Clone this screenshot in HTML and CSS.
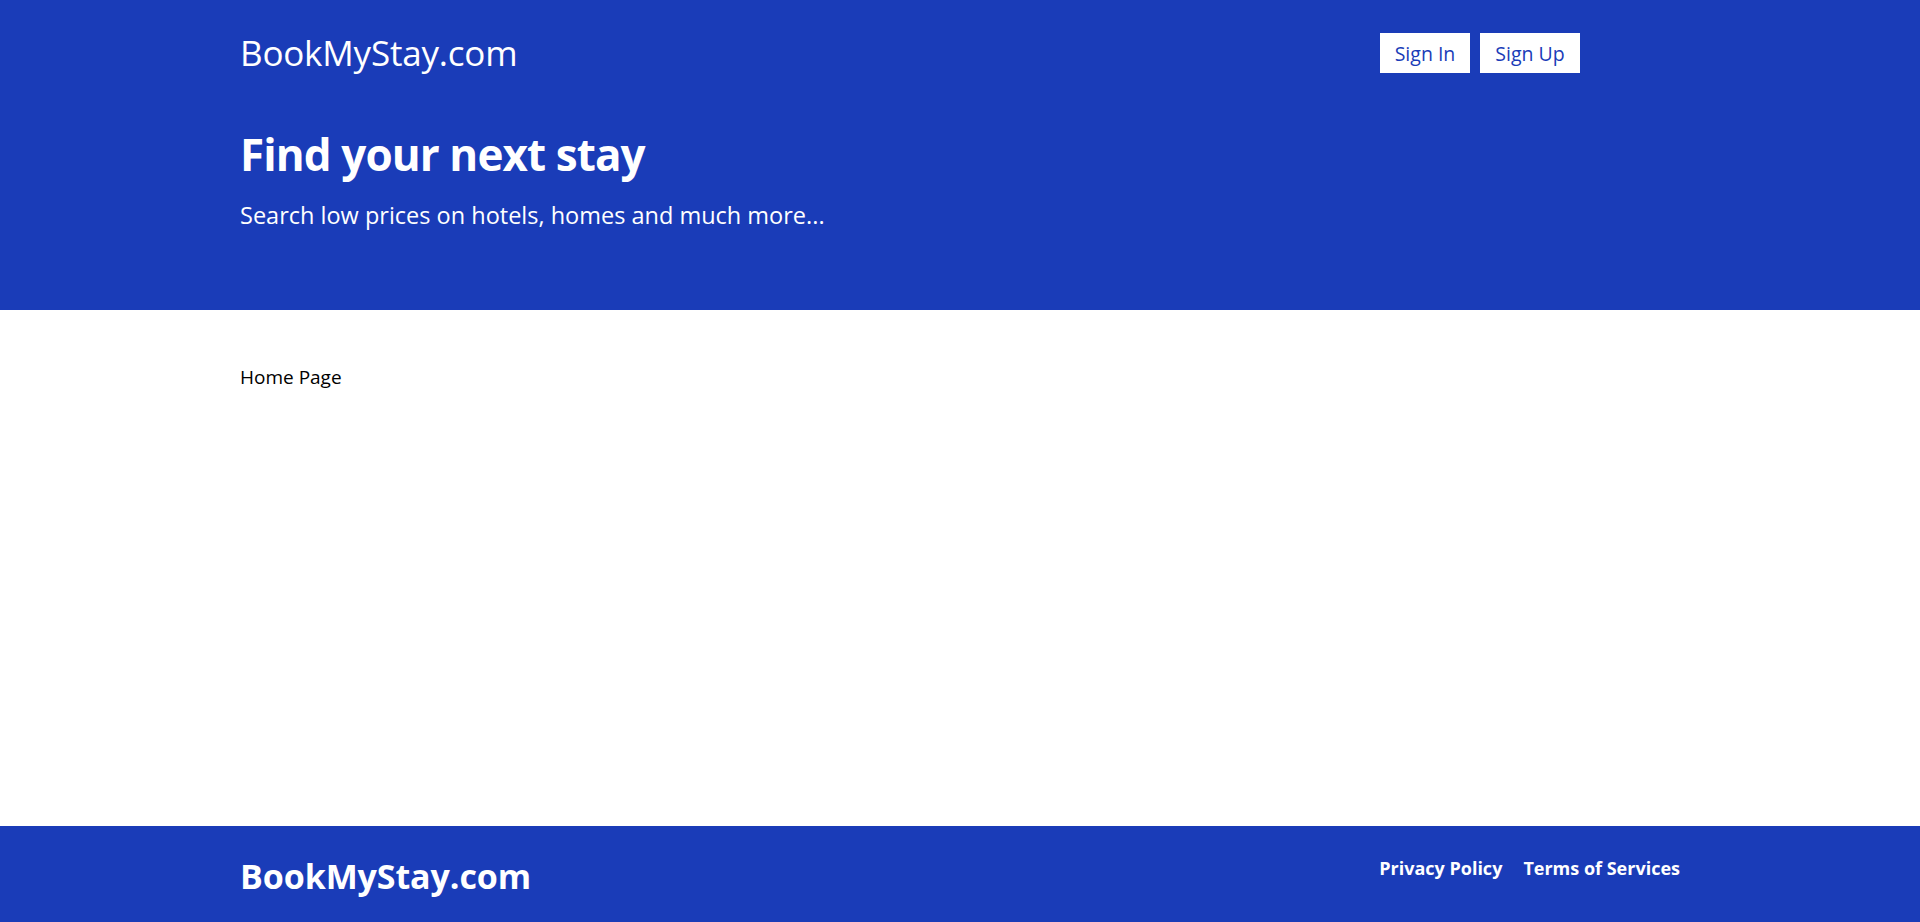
FILE: index.html
```html
<!DOCTYPE html>
<html lang="en">
<head>
<meta charset="utf-8">
<title>BookMyStay.com</title>
<link rel="stylesheet" href="styles.css">
</head>
<body>
<header class="hero">
  <div class="container">
    <div class="topbar">
      <span class="logo">BookMyStay.com</span>
      <div class="auth">
        <a class="btn btn-in" href="#">Sign In</a>
        <a class="btn btn-up" href="#">Sign Up</a>
      </div>
    </div>
    <h1 class="hero-title">Find your next stay</h1>
    <p class="hero-sub">Search low prices on hotels, homes and much more...</p>
  </div>
</header>
<main class="content container">
  <p class="page-label">Home Page</p>
</main>
<footer class="footer">
  <div class="container footer-inner">
    <span class="footer-logo">BookMyStay.com</span>
    <nav class="footer-links">
      <a href="#">Privacy Policy</a>
      <a href="#">Terms of Services</a>
    </nav>
  </div>
</footer>
</body>
</html>
```
FILE: styles.css
```css
* { box-sizing: border-box; }
html, body { margin: 0; padding: 0; }
body {
  font-family: "Open Sans", "Noto Sans", sans-serif;
  color: #000;
  background: #fff;
  min-height: 100vh;
  display: flex;
  flex-direction: column;
}
.container {
  width: 1440px;
  margin: 0 auto;
}
.hero {
  background: #1a3cb8;
  color: #fff;
  height: 310px;
  padding-top: 33px;
}
.topbar {
  display: flex;
  align-items: center;
  justify-content: space-between;
  height: 40px;
}
.logo {
  font-size: 35px;
  letter-spacing: -0.2px;
  line-height: 40px;
}
.auth {
  display: flex;
  gap: 10px;
  margin-right: 100px;
}
.btn {
  display: flex;
  align-items: center;
  justify-content: center;
  height: 40px;
  background: #fff;
  color: #1a3cb8;
  text-decoration: none;
  font-size: 19.5px;
}
.btn-in { width: 90px; }
.btn-up { width: 100px; }
.hero-title {
  margin: 51px 0 0;
  font-size: 44px;
  font-weight: 700;
  line-height: 60px;
  letter-spacing: -0.9px;
}
.hero-sub {
  margin: 15px 0 0;
  font-size: 23.5px;
  line-height: 32px;
}
.content {
  flex: 1;
  padding-top: 55px;
}
.page-label {
  margin: 0;
  font-size: 19px;
  line-height: 24px;
}
.footer {
  background: #1a3cb8;
  color: #fff;
  height: 96px;
}
.footer-inner {
  display: flex;
  justify-content: space-between;
  align-items: center;
  height: 96px;
}
.footer-logo {
  font-size: 34px;
  font-weight: 700;
  letter-spacing: -0.1px;
  margin-top: 4px;
}
.footer-links {
  display: flex;
  gap: 21px;
  margin-top: -12px;
}
.footer-links a {
  color: #fff;
  text-decoration: none;
  font-weight: 700;
  font-size: 18px;
}
```
